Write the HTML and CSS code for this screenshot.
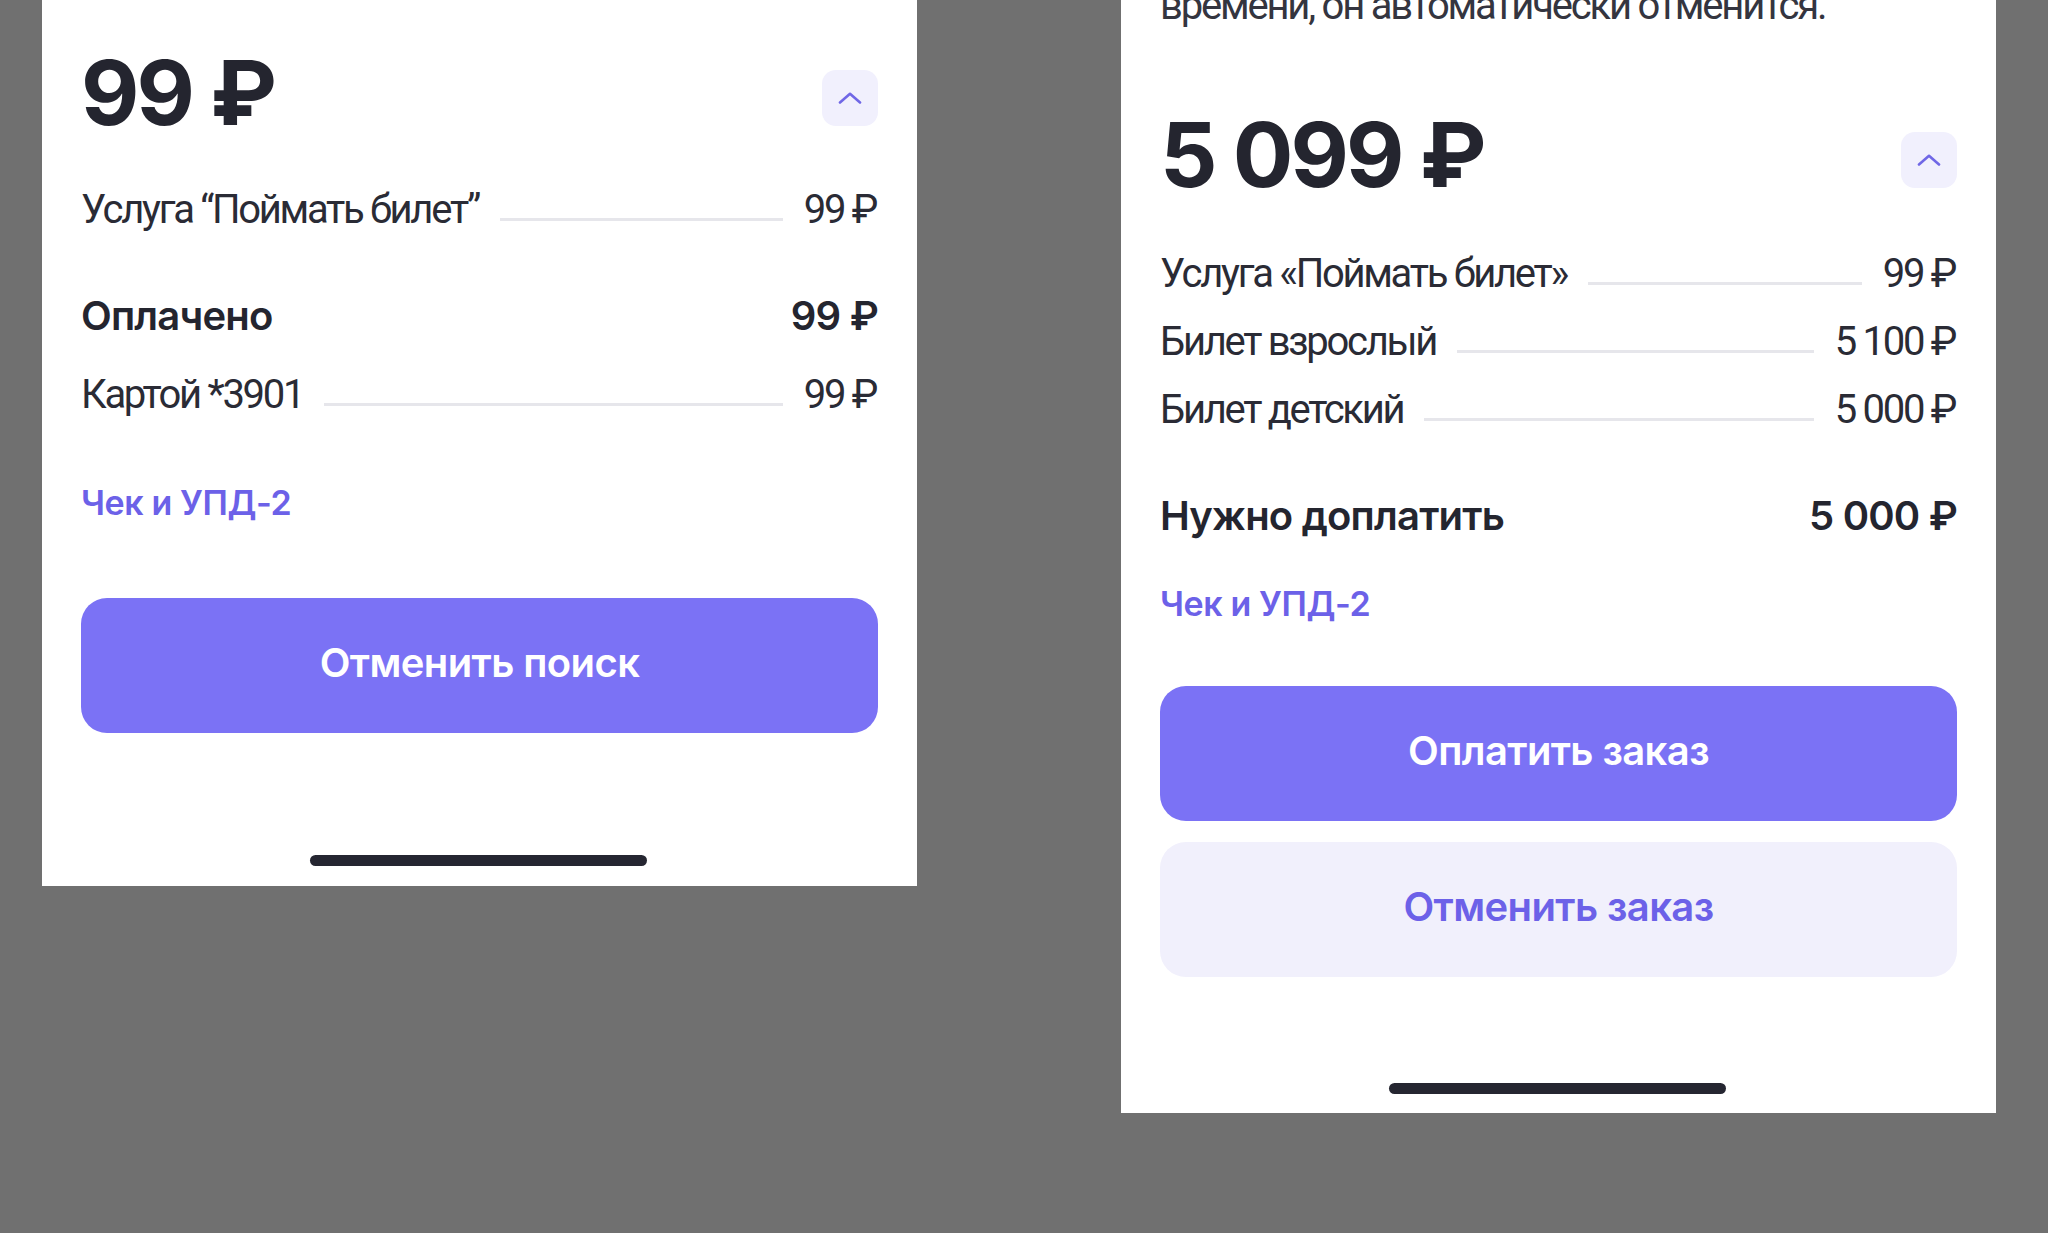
FILE: index.html
```html
<!DOCTYPE html>
<html lang="ru">
<head>
<meta charset="utf-8">
<title>Заказ</title>
<link rel="stylesheet" href="styles.css">
</head>
<body>
<div class="stage">
  <section class="card card-left">
    <div class="total">
      <div class="total-sum">99 ₽</div>
      <button class="toggle" type="button" aria-label="Свернуть">
        <svg width="24" height="12" viewBox="0 0 24 12"><path d="M2 10.5 L12 1.8 L22 10.5" fill="none" stroke="#7067e6" stroke-width="2.6" stroke-linecap="round" stroke-linejoin="round"/></svg>
      </button>
    </div>
    <div class="line-row l-first">
      <span class="label">Услуга “Поймать билет”</span><span class="rule"></span><span class="value">99 ₽</span>
    </div>
    <div class="sum-row l-paid">
      <span>Оплачено</span><span>99 ₽</span>
    </div>
    <div class="line-row l-card">
      <span class="label">Картой *3901</span><span class="rule"></span><span class="value">99 ₽</span>
    </div>
    <a class="link l-link" href="#">Чек и УПД-2</a>
    <button class="btn btn-primary l-btn" type="button">Отменить поиск</button>
    <div class="home-indicator l-home"></div>
  </section>

  <section class="card card-right">
    <p class="note">времени, он автоматически отменится.</p>
    <div class="total r-total">
      <div class="total-sum">5 099 ₽</div>
      <button class="toggle" type="button" aria-label="Свернуть">
        <svg width="24" height="12" viewBox="0 0 24 12"><path d="M2 10.5 L12 1.8 L22 10.5" fill="none" stroke="#7067e6" stroke-width="2.6" stroke-linecap="round" stroke-linejoin="round"/></svg>
      </button>
    </div>
    <div class="line-row r-first">
      <span class="label">Услуга «Поймать билет»</span><span class="rule"></span><span class="value">99 ₽</span>
    </div>
    <div class="line-row r-next">
      <span class="label">Билет взрослый</span><span class="rule"></span><span class="value">5 100 ₽</span>
    </div>
    <div class="line-row r-next">
      <span class="label">Билет детский</span><span class="rule"></span><span class="value">5 000 ₽</span>
    </div>
    <div class="sum-row r-due">
      <span>Нужно доплатить</span><span>5 000 ₽</span>
    </div>
    <a class="link r-link" href="#">Чек и УПД-2</a>
    <button class="btn btn-primary r-btn" type="button">Оплатить заказ</button>
    <button class="btn btn-secondary r-btn2" type="button">Отменить заказ</button>
    <div class="home-indicator r-home"></div>
  </section>
</div>
</body>
</html>
```

FILE: styles.css
```css
* { box-sizing: border-box; }

html, body {
  margin: 0;
  padding: 0;
}

body {
  background: #707070;
  width: 2048px;
  height: 1233px;
  overflow: hidden;
  font-family: "Inter", "Noto Sans", sans-serif;
  color: #24252f;
}

.stage {
  display: flex;
  align-items: flex-start;
  gap: 204px;
  padding-left: 42px;
}

.card {
  width: 875px;
  background: #ffffff;
  padding: 0 39px;
  display: flex;
  flex-direction: column;
}

.card-left { height: 886px; }
.card-right { height: 1113px; }

.note {
  margin: -18px 0 0;
  font-family: "Roboto", "Liberation Sans", sans-serif;
  font-size: 40px;
  line-height: 48px;
  color: #34353f;
  letter-spacing: -2.2px;
  white-space: nowrap;
}

.total {
  display: flex;
  justify-content: space-between;
  align-items: flex-start;
  margin-top: 48px;
}

.r-total { margin-top: 80px; }

.total-sum {
  font-size: 90px;
  line-height: 90px;
  font-weight: 700;
  letter-spacing: -3px;
  color: #24252f;
}

.toggle {
  width: 56px;
  height: 56px;
  margin-top: 22px;
  border: 0;
  padding: 0;
  border-radius: 14px;
  background: #f1f0fd;
  display: flex;
  align-items: center;
  justify-content: center;
}

.line-row {
  display: flex;
  align-items: flex-start;
  gap: 21px;
  font-family: "Roboto", "Liberation Sans", sans-serif;
  font-size: 40px;
  line-height: 48px;
  color: #2a2b35;
  letter-spacing: -2.3px;
}

.line-row .label,
.line-row .value { white-space: nowrap; }

.line-row .value { padding-right: 2px; }

.rule {
  flex: 1;
  height: 3px;
  margin-top: 32px;
  background: #e6e6eb;
}

.sum-row {
  display: flex;
  justify-content: space-between;
  font-size: 40px;
  line-height: 48px;
  font-weight: 600;
  color: #24252f;
  letter-spacing: -0.8px;
}

.link {
  font-size: 34px;
  line-height: 40px;
  font-weight: 600;
  color: #6c61e8;
  text-decoration: none;
  letter-spacing: -0.4px;
  align-self: flex-start;
}

.btn {
  width: 100%;
  height: 135px;
  border: 0;
  border-radius: 26px;
  font-family: inherit;
  font-size: 40px;
  font-weight: 600;
  letter-spacing: -0.6px;
  padding-bottom: 7px;
}

.btn-primary {
  background: #7b72f5;
  color: #ffffff;
}

.btn-secondary {
  background: #f1f0fc;
  color: #6c61e8;
}

.home-indicator {
  width: 337px;
  height: 11px;
  border-radius: 6px;
  background: #252631;
  align-self: center;
  margin-left: -2px;
}

/* left card spacing */
.l-first { margin-top: 48px; }
.l-paid { margin-top: 58px; }
.l-card { margin-top: 31px; }
.l-link { margin-top: 64px; }
.l-btn { margin-top: 75px; }
.l-home { margin-top: 122px; }

/* right card spacing */
.r-first { margin-top: 50px; }
.r-next { margin-top: 20px; }
.r-due { margin-top: 58px; }
.r-link { margin-top: 44px; }
.r-btn { margin-top: 62px; }
.r-btn2 { margin-top: 21px; }
.r-home { margin-top: 106px; }
```
